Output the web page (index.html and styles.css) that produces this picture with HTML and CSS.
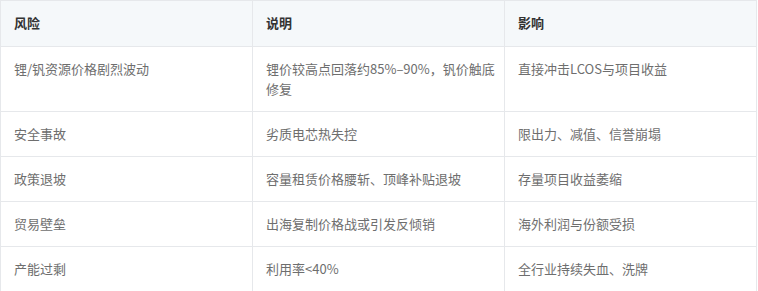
FILE: index.html
```html
<!DOCTYPE html>
<html lang="zh-CN">
<head>
<meta charset="utf-8">
<link rel="stylesheet" href="styles.css">
</head>
<body>
<table class="risk-table">
  <thead>
    <tr><th>风险</th><th>说明</th><th>影响</th></tr>
  </thead>
  <tbody>
    <tr><td>锂/钒资源价格剧烈波动</td><td>锂价较高点回落约85%–90%，钒价触底修复</td><td>直接冲击LCOS与项目收益</td></tr>
    <tr><td>安全事故</td><td>劣质电芯热失控</td><td>限出力、减值、信誉崩塌</td></tr>
    <tr><td>政策退坡</td><td>容量租赁价格腰斩、顶峰补贴退坡</td><td>存量项目收益萎缩</td></tr>
    <tr><td>贸易壁垒</td><td>出海复制价格战或引发反倾销</td><td>海外利润与份额受损</td></tr>
    <tr><td>产能过剩</td><td>利用率&lt;40%</td><td>全行业持续失血、洗牌</td></tr>
  </tbody>
</table>
</body>
</html>
```

FILE: styles.css
```css
html, body {
  margin: 0;
  padding: 0;
  background: #ffffff;
}
.risk-table {
  width: 757px;
  border-collapse: collapse;
  table-layout: fixed;
  font-family: "Noto Sans CJK SC", "Noto Sans", sans-serif;
  font-size: 13px;
  line-height: 20px;
}
.risk-table th,
.risk-table td {
  border: 1px solid #e6e8eb;
  text-align: left;
  vertical-align: top;
  padding: 12px 4px 12px 13px;
}
.risk-table th {
  background: #f5f8fa;
  color: #333333;
  font-weight: 700;
  padding-top: 12px;
  padding-bottom: 13px;
}
.risk-table td {
  color: #6e6e6e;
}
```
